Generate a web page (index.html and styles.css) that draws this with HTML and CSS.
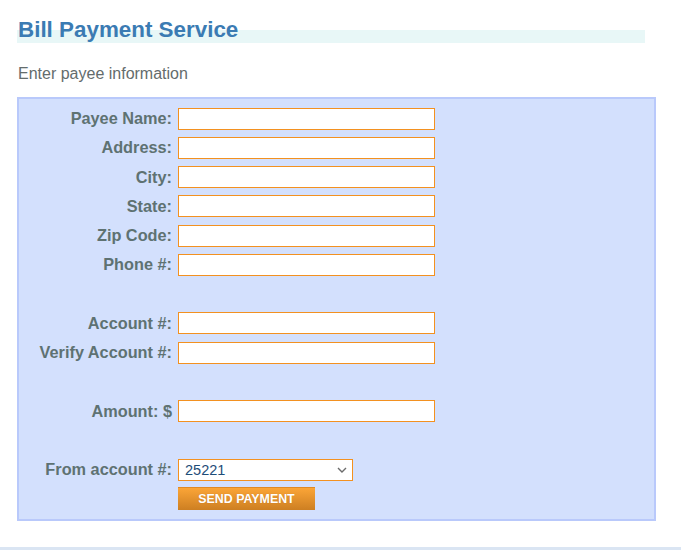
FILE: index.html
```html
<!DOCTYPE html>
<html>
<head>
<meta charset="utf-8">
<link rel="stylesheet" href="styles.css">
</head>
<body>
<div class="page">
  <h1 class="title">Bill Payment Service</h1>
  <p class="intro">Enter payee information</p>
  <div class="panel">
    <div class="form">
      <label class="lbl">Payee Name:</label><input class="field" type="text">
      <label class="lbl">Address:</label><input class="field" type="text">
      <label class="lbl">City:</label><input class="field" type="text">
      <label class="lbl">State:</label><input class="field" type="text">
      <label class="lbl">Zip Code:</label><input class="field" type="text">
      <label class="lbl">Phone #:</label><input class="field" type="text">
      <div class="spacer"></div>
      <label class="lbl">Account #:</label><input class="field" type="text">
      <label class="lbl">Verify Account #:</label><input class="field" type="text">
      <div class="spacer"></div>
      <label class="lbl">Amount: $</label><input class="field" type="text">
      <div class="spacer"></div>
      <label class="lbl">From account #:</label>
      <div class="select-wrap">
        <select class="select"><option>25221</option></select>
        <svg class="chev" width="10" height="6" viewBox="0 0 10 6"><path d="M1 1 L5 5 L9 1" fill="none" stroke="#6b6b6b" stroke-width="1.4"/></svg>
      </div>
      <div></div>
      <div><button class="btn" type="button">SEND PAYMENT</button></div>
    </div>
  </div>
  <div class="footer"></div>
</div>
</body>
</html>
```

FILE: styles.css
```css
html, body {
  margin: 0;
  padding: 0;
  background: #ffffff;
  font-family: "Liberation Sans", Arial, sans-serif;
}
.page {
  padding-top: 17px;
}
.title {
  margin: 0 0 0 17px;
  width: 628px;
  height: 26px;
  font-size: 22.4px;
  line-height: 26px;
  font-weight: bold;
  color: #3b7bb3;
  padding-left: 1px;
  box-sizing: border-box;
  background: linear-gradient(#e8f7f7, #e8f7f7) no-repeat left bottom / 100% 13px;
}
.intro {
  margin: 22px 0 0 18px;
  font-size: 16px;
  line-height: 18px;
  color: #646c6c;
}
.panel {
  margin: 14px 0 0 17px;
  width: 635px;
  border: 2px solid #b9c9fb;
  background: #d3e0fd;
  padding: 5px 0 5px 0;
}
.form {
  display: grid;
  grid-template-columns: 153px auto;
  grid-auto-rows: 29.25px;
  column-gap: 6px;
  align-items: center;
  justify-content: start;
}
.spacer {
  grid-column: 1 / 3;
}
.lbl {
  text-align: right;
  font-weight: bold;
  font-size: 16.3px;
  color: #5e7272;
  white-space: nowrap;
}
.field {
  width: 257px;
  height: 22px;
  box-sizing: border-box;
  border: 1px solid #f39120;
  background: #ffffff;
  margin: 0;
  padding: 0 4px;
  font-family: inherit;
}
.select-wrap {
  position: relative;
  width: 175px;
  height: 22px;
}
.select {
  appearance: none;
  -webkit-appearance: none;
  width: 175px;
  height: 22px;
  box-sizing: border-box;
  border: 1px solid #f39120;
  border-radius: 0;
  background: #ffffff;
  margin: 0;
  padding: 0 6px;
  font-family: "Liberation Sans", Arial, sans-serif;
  font-size: 14.5px;
  color: #1e4d78;
}
.chev {
  position: absolute;
  right: 6px;
  top: 8px;
  pointer-events: none;
}
.btn {
  display: block;
  width: 137px;
  height: 23px;
  margin: 0;
  padding: 0;
  border: none;
  border-top: 1px solid #e08a25;
  background: linear-gradient(#fba537, #cd7f22);
  color: #ffffff;
  font-family: "Liberation Sans", Arial, sans-serif;
  font-size: 12.4px;
  font-weight: bold;
  line-height: 21px;
  text-align: center;
  text-shadow: 0 0 1px rgba(150, 80, 0, 0.4);
}
.footer {
  margin-top: 26px;
  height: 1px;
  border-top: 3px solid #dae5f3;
  background: #eef3fa;
}
```
